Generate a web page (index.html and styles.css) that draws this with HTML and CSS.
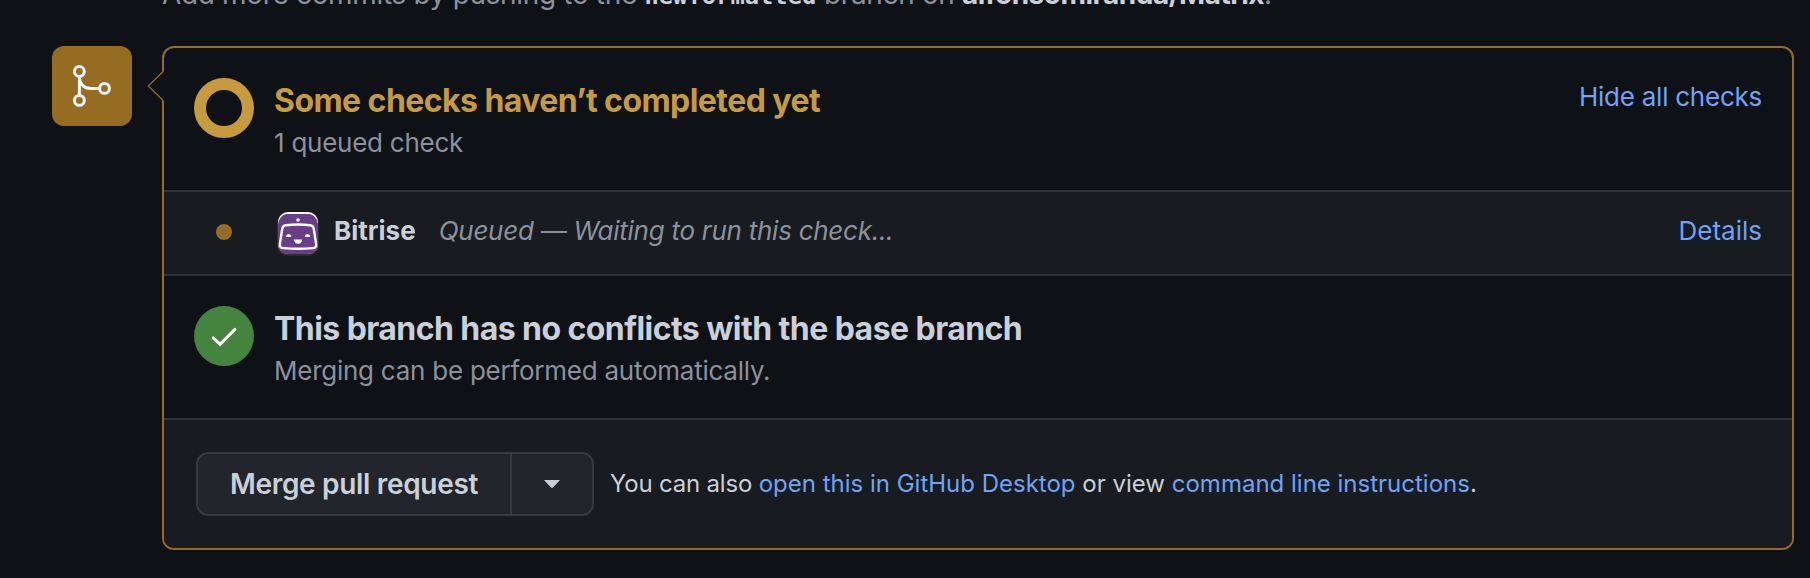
FILE: index.html
```html
<!DOCTYPE html>
<html lang="en">
<head>
<meta charset="utf-8">
<title>Merge pull request</title>
<link rel="stylesheet" href="styles.css">
</head>
<body>
<p class="push-hint">Add more commits by pushing to the <code class="branch">newformatted</code> branch on <strong class="repo">alfonsomiranda/Matrix</strong>.</p>
<main class="merge">
  <div class="merge-badge">
    <svg width="48" height="48" viewBox="0 0 48 48" fill="none" stroke="#f3f6fa" stroke-width="3"><circle cx="11.4" cy="9.5" r="4.9"/><circle cx="11.4" cy="38.4" r="4.9"/><circle cx="36.5" cy="26.4" r="4.9"/><path d="M11.4 14.5v19M11.4 15c0 7 4.6 11.4 11.6 11.4h8.6"/></svg>
  </div>
  <div class="box">
    <svg class="pointer" width="17" height="30" viewBox="0 0 17 30"><path d="M17 .5 16 1 1.2 15 16 29.5h1z" fill="#0e1116"/><path d="M16 .8 1.2 15 16 29.2" fill="none" stroke="#966c23" stroke-width="1.2"/></svg>
    <section class="row status">
      <svg class="status-icon" width="60" height="60" viewBox="0 0 60 60"><circle cx="30" cy="30" r="24" fill="none" stroke="#c69a3e" stroke-width="12"/></svg>
      <div class="status-text">
        <h3 class="title title-pending">Some checks haven’t completed yet</h3>
        <p class="sub">1 queued check</p>
      </div>
      <a class="link hide-link">Hide all checks</a>
    </section>
    <section class="row check">
      <span class="dot-cell"><span class="dot"></span></span>
      <svg class="avatar" width="42" height="44" viewBox="0 0 42 44">
        <rect x="0" y="1" width="42" height="43" rx="11" fill="#2c2e36"/>
        <rect x="1" y="0" width="40" height="42" rx="10" fill="#fff"/>
        <path d="M1 12C3 4 7 2 11 2h20c4 0 8 2 10 10v21c-1 6-5 9-10 9H11C6 42 2 39 1 33z" fill="#683f87"/>
        <circle cx="21" cy="8" r="1.8" fill="#fff"/>
        <path d="M8.6 13.200c8-.8 17-.8 24.800 0 1.900.2 2.900 1.400 3.300 3.200l2.400 15.500c.4 2.600-.9 4-3.300 4.200-9.700.8-19.900.8-29.600 0-2.400-.2-3.700-1.600-3.300-4.200l2.400-15.500c.4-1.800 1.400-3 3.300-3.200z" fill="none" stroke="#fff" stroke-width="2.400"/>
        <path d="M9 25c0-4 5.400-4 5.400 0zM27.800 25c0-4 5.400-4 5.400 0z" fill="#fff"/>
        <path d="M17 27.500h8.200c0 5.600-8.200 5.600-8.200 0z" fill="#fff"/>
      </svg>
      <strong class="app">Bitrise</strong>
      <em class="state">Queued — Waiting to run this check...</em>
      <a class="link details-link">Details</a>
    </section>
    <section class="row status">
      <svg class="status-icon" width="60" height="60" viewBox="0 0 60 60"><circle cx="30" cy="30" r="30" fill="#45843e"/><path d="m19.200 31.800 6.900 6.600 14.800-15" fill="none" stroke="#fff" stroke-width="3" stroke-linecap="round"/></svg>
      <div class="status-text">
        <h3 class="title">This branch has no conflicts with the base branch</h3>
        <p class="sub">Merging can be performed automatically.</p>
      </div>
    </section>
    <section class="row actions">
      <div class="btn-group">
        <button class="btn btn-main">Merge pull request</button>
        <button class="btn btn-caret" aria-label="Merge options"><svg width="16" height="8" viewBox="0 0 16 8"><path d="M0 0h16L9 7.600q-1 .8-2 0z" fill="#c9d0d9"/></svg></button>
      </div>
      <p class="alt"><span class="alt-lead">You can also </span><a class="link">open this in GitHub Desktop</a> or view <a class="link">command line instructions</a>.</p>
    </section>
  </div>
</main>
</body>
</html>
```
FILE: styles.css
```css
* { box-sizing: border-box; }
body {
  margin: 0;
  height: 578px;
  overflow: hidden;
  background: #0e1116;
  color: #c9d0d9;
  font-family: Inter, "Liberation Sans", sans-serif;
  font-size: 26px;
}
h3, p { margin: 0; }
.push-hint {
  height: 47px;
  margin: -26px 0 0 162px;
  font-size: 28px;
  line-height: 40px;
  letter-spacing: -0.34px;
  color: #8b929c;
  white-space: nowrap;
}
.branch { font: bold 23.8px/1 "DejaVu Sans Mono", monospace; letter-spacing: 0; color: #c9d0d9; }
.repo { font-weight: 650; letter-spacing: -0.5px; color: #c9d0d9; }
.merge {
  display: flex;
  gap: 30px;
  padding: 25px 16px 0 52px;
}
.merge-badge {
  display: grid;
  place-items: center;
  flex: none;
  width: 80px;
  height: 80px;
  border-radius: 12px;
  background: #966c23;
}
.box {
  position: relative;
  flex: 1;
  height: 504px;
  border: 2px solid #966c23;
  border-radius: 12px;
}
.pointer { position: absolute; left: -17px; top: 23px; }
.row { display: flex; white-space: nowrap; }
.row + .row { border-top: 2px solid #303338; }
.status { height: 142px; padding: 30px 30px 0; }
.row + .status { height: 144px; }
.status-icon { flex: none; margin-right: 20px; }
.status-text { flex: 1; }
.title {
  font-size: 32px;
  line-height: 46px;
  font-weight: 650;
  letter-spacing: -0.56px;
}
.title-pending { color: #c69a3e; }
.sub { color: #8b929c; line-height: 38px; letter-spacing: -0.25px; }
.link { color: #6ba4f8; }
.hide-link { line-height: 38px; letter-spacing: -0.25px; }
.check {
  height: 84px;
  align-items: center;
  padding: 0 30px 2px;
  background: #181b20;
}
.dot-cell { display: flex; justify-content: center; width: 60px; margin-right: 23px; }
.dot { width: 16px; height: 16px; border-radius: 50%; background: #966c23; }
.avatar { margin: 4px 15px 0 0; }
.app, .state, .details-link { padding-bottom: 4px; }
.app { font-weight: 650; letter-spacing: 0; margin-right: 23px; }
.state { flex: 1; color: #8b929c; letter-spacing: -0.26px; }
.actions {
  height: 130px;
  align-items: center;
  padding: 0 32px;
  background: #181b20;
  border-radius: 0 0 10px 10px;
}
.btn-group { display: flex; flex: none; margin-right: 16px; }
.btn {
  height: 64px;
  padding: 0;
  border: 2px solid #36393e;
  background: #22252b;
  color: #c9d0d9;
  font: 575 28px/40px Inter, sans-serif;
  letter-spacing: -0.32px;
}
.btn-main { width: 316px; border-radius: 12px 0 0 12px; }
.btn-caret {
  display: grid;
  place-items: center;
  width: 82px;
  border-left: 0;
  border-radius: 0 12px 12px 0;
}
.alt { font-size: 24px; padding-bottom: 2px; }
.alt-lead { letter-spacing: -0.2px; }
```
